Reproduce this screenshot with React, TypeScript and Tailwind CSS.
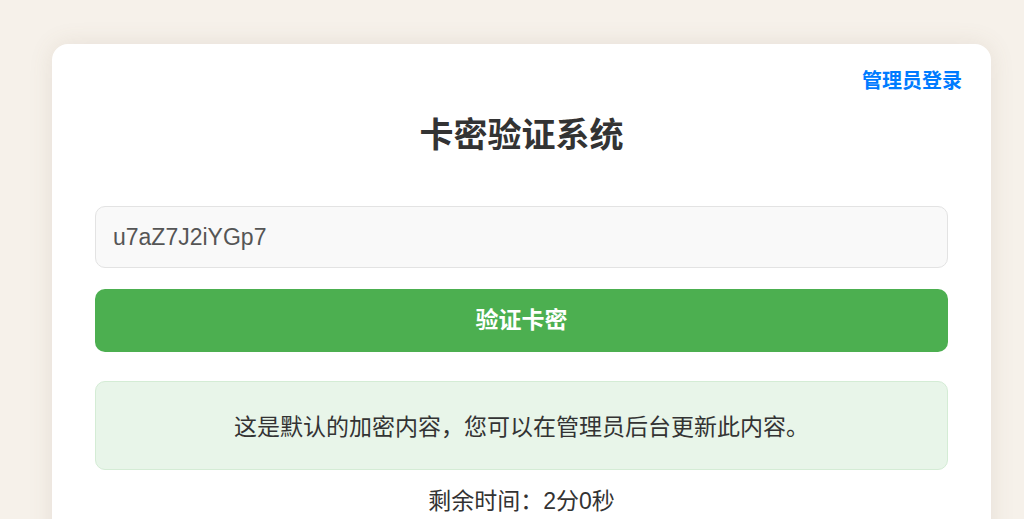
import React, { useState } from 'react';

const font = 'font-["Liberation_Sans","Noto_Sans_CJK_SC",sans-serif]';

const App: React.FC = () => {
  const [code, setCode] = useState('u7aZ7J2iYGp7');

  return (
    <div className={`min-h-screen bg-[#f6f1ea] pt-[44px] ${font}`}>
      <div className="relative ml-[52px] w-[939px] rounded-2xl bg-white px-[43px] pt-[71px] pb-[40px] shadow-[0_0_24px_rgba(120,100,70,0.12)]">
        <a href="#" className="absolute top-[22px] right-[29px] text-[20px] leading-[30px] font-bold text-[#007bff]">
          管理员登录
        </a>

        <h1 className="text-center text-[34px] leading-[41px] font-bold text-[#333]">卡密验证系统</h1>

        <input
          value={code}
          onChange={e => setCode(e.target.value)}
          className="mt-[50px] block h-[62px] w-full rounded-[10px] border border-[#e3e3e3] bg-[#f9f9f9] px-[17px] text-[23px] text-[#555] outline-none"
        />

        <button className="mt-[21px] flex h-[63px] w-full items-center justify-center rounded-[10px] bg-[#4caf50] text-[23px] font-bold text-white">
          验证卡密
        </button>

        <div className="mt-[29px] flex h-[89px] items-center justify-center rounded-[10px] border border-[#d4ecd5] bg-[#e8f5e9] pt-[4px] text-[23px] text-[#333]">
          这是默认的加密内容，您可以在管理员后台更新此内容。
        </div>

        <div className="mt-[15px] text-center text-[23px] leading-[33px] text-[#333]">剩余时间：2分0秒</div>
      </div>
    </div>
  );
};

export default App;
